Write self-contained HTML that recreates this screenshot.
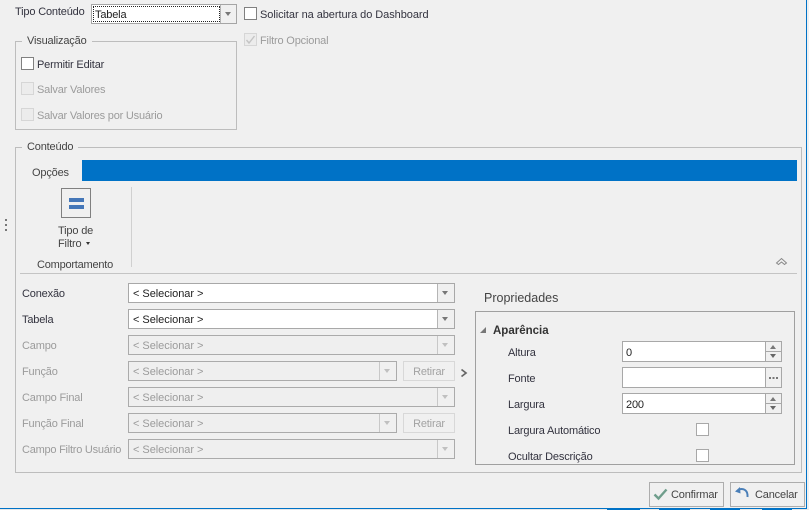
<!DOCTYPE html>
<html><head><meta charset="utf-8">
<style>
html,body{margin:0;padding:0}
body{width:809px;height:510px;overflow:hidden;background:#f0f0f0;position:relative;font-family:"Liberation Sans",sans-serif;font-size:11px;letter-spacing:-.17px;color:#33333f}
div,span,svg{position:absolute;box-sizing:border-box}
.t{white-space:nowrap;line-height:14px;height:14px;margin-top:1px}
.d{color:#9b9b9b}
.g{border:1px solid #bdbdbd}
.leg{background:#f0f0f0;padding:0 5px;white-space:nowrap;line-height:14px;height:14px;color:#444;margin-top:1px}
.cb{width:14px;height:14px;border:1px solid #808080;background:#fff}
.cbd{width:13px;height:13px;border:1px solid #d6d6d6;background:#ececec}
.c{border:1px solid #a8a8a8;background:#fff;height:20px;left:128px;width:327px;line-height:19px;padding-top:1px;padding-left:4px;color:#222;white-space:nowrap;letter-spacing:-.04px}
.c.x{background:#efefef;color:#9b9b9b;border-color:#ababab}
.c i{position:absolute;right:0;top:0;width:16px;height:18px;border-left:1px solid #b5b5b5;background:#f0f0f0}
.c i:after{content:"";position:absolute;left:4px;top:7px;border:3.5px solid transparent;border-top:4px solid #777;border-bottom:0}
.c.x i{border-left-color:#c8c8c8}
.c.x i:after{border-top-color:#c0c0c0}
.r{left:403px;width:52px;height:20px;border:1px solid #d8d8d8;text-align:center;line-height:19px;padding-top:1px;color:#a2a2a2}
.in{left:622px;width:160px;height:21px;border:1px solid #a8a8a8;background:#fff;line-height:20px;padding-top:1px;padding-left:3px;color:#222}
.sp{left:765px;width:17px;height:21px;border:1px solid #a8a8a8;background:#f0f0f0}
.sp b{position:absolute;left:0;width:15px;height:1px;background:#a8a8a8;top:9px}
.up{position:absolute;left:4px;top:3px;border:3.5px solid transparent;border-bottom:4px solid #777;border-top:0;width:0;height:0}
.dn{position:absolute;left:4px;top:12px;border:3.5px solid transparent;border-top:4px solid #666;border-bottom:0;width:0;height:0}
.btn{height:25px;top:482px;border:1px solid #adadad;background:#f0f0f0;color:#444}
</style></head><body>

<div class="t" style="left:15px;top:4px">Tipo Conteúdo</div>
<div style="left:91px;top:4px;width:146px;height:20px;border:1px solid #a5a5a5;background:#fff"></div>
<div style="left:93px;top:6px;width:127px;height:16px;border:1px dotted #222;line-height:15px;padding-top:1px;color:#222;padding-left:1px">Tabela</div>
<div style="left:220px;top:5px;width:16px;height:18px;border-left:1px solid #b5b5b5;background:#f0f0f0"></div>
<div style="left:225px;top:12px;width:0;height:0;border:3.5px solid transparent;border-top:4px solid #777;border-bottom:0"></div>
<div class="cb" style="left:244px;top:7px;width:13px;height:13px"></div>
<div class="t" style="left:260px;top:7px;letter-spacing:-.06px">Solicitar na abertura do Dashboard</div>
<div class="cbd" style="left:244px;top:33px"></div>
<svg style="left:245px;top:34px" width="11" height="11" viewBox="0 0 11 11"><path d="M1.5 6 L4 9 L9.5 2" fill="none" stroke="#c4c4c4" stroke-width="1.4"/></svg>
<div class="t d" style="left:260px;top:33px">Filtro Opcional</div>

<div class="g" style="left:15px;top:41px;width:222px;height:89px"></div>
<div class="leg" style="left:22px;top:33px">Visualização</div>
<div class="cb" style="left:21px;top:57px;width:13px;height:13px"></div>
<div class="t" style="left:37px;top:57px">Permitir Editar</div>
<div class="cbd" style="left:21px;top:82px"></div>
<div class="t d" style="left:37px;top:82px">Salvar Valores</div>
<div class="cbd" style="left:21px;top:108px"></div>
<div class="t d" style="left:37px;top:108px;letter-spacing:-.2px">Salvar Valores por Usuário</div>

<div class="g" style="left:15px;top:147px;width:787px;height:326px"></div>
<div class="leg" style="left:22px;top:139px">Conteúdo</div>
<div style="left:82px;top:160px;width:715px;height:21px;background:#0072c6"></div>
<div class="t" style="left:32px;top:165px;color:#444">Opções</div>
<div style="left:61px;top:188px;width:30px;height:30px;border:1px solid #808080"></div>
<div style="left:69px;top:198px;width:15px;height:4px;background:#4577b8"></div>
<div style="left:69px;top:205px;width:15px;height:4px;background:#4577b8"></div>
<div class="t" style="left:58px;top:223px;color:#444">Tipo de</div>
<div class="t" style="left:58px;top:236px;color:#444">Filtro</div>
<div style="left:86px;top:242px;width:0;height:0;border:2.5px solid transparent;border-top:3px solid #333;border-bottom:0"></div>
<div class="t" style="left:37px;top:257px;color:#444;letter-spacing:-.22px">Comportamento</div>
<div style="left:131px;top:187px;width:1px;height:80px;background:#d0d0d0"></div>
<div style="left:20px;top:273px;width:777px;height:1px;background:#c4c4c4"></div>
<svg style="left:775px;top:256px" width="13" height="11" viewBox="0 0 13 11"><path d="M1.5 7 L6.5 2.5 L11.5 7 L9.5 8.5 L6.5 6 L3.5 8.5 Z" fill="none" stroke="#888" stroke-width="1"/></svg>

<div class="t" style="left:22px;top:286px">Conexão</div>
<div class="c" style="top:283px">&lt; Selecionar &gt;<i></i></div>
<div class="t" style="left:22px;top:312px">Tabela</div>
<div class="c" style="top:309px">&lt; Selecionar &gt;<i></i></div>
<div class="t d" style="left:22px;top:338px">Campo</div>
<div class="c x" style="top:335px">&lt; Selecionar &gt;<i></i></div>
<div class="t d" style="left:22px;top:364px">Função</div>
<div class="c x" style="top:361px;width:269px">&lt; Selecionar &gt;<i></i></div>
<div class="r" style="top:361px">Retirar</div>
<div class="t d" style="left:22px;top:390px">Campo Final</div>
<div class="c x" style="top:387px">&lt; Selecionar &gt;<i></i></div>
<div class="t d" style="left:22px;top:416px">Função Final</div>
<div class="c x" style="top:413px;width:269px">&lt; Selecionar &gt;<i></i></div>
<div class="r" style="top:413px">Retirar</div>
<div class="t d" style="left:22px;top:442px;letter-spacing:-.24px">Campo Filtro Usuário</div>
<div class="c x" style="top:439px">&lt; Selecionar &gt;<i></i></div>

<svg style="left:460px;top:368px" width="9" height="10" viewBox="0 0 9 10"><path d="M1.5 1.5 L6 5 L1.5 8.5" fill="none" stroke="#666" stroke-width="1.7"/></svg>

<div class="t" style="left:484px;top:290px;font-size:12.5px;letter-spacing:0;color:#444">Propriedades</div>
<div style="left:475px;top:311px;width:320px;height:154px;border:1px solid #a0a0a0"></div>
<div style="left:480px;top:327px;width:0;height:0;border-style:solid;border-width:0 0 6px 6px;border-color:transparent transparent #777 transparent"></div>
<div class="t" style="left:493px;top:323px;font-weight:bold;font-size:11.5px;letter-spacing:0;color:#333">Aparência</div>
<div class="t" style="left:508px;top:345px">Altura</div>
<div class="t" style="left:508px;top:371px">Fonte</div>
<div class="t" style="left:508px;top:397px">Largura</div>
<div class="t" style="left:508px;top:423px">Largura Automático</div>
<div class="t" style="left:508px;top:449px">Ocultar Descrição</div>

<div class="in" style="top:341px">0</div>
<div class="sp" style="top:341px"><b></b><span class="up"></span><span class="dn"></span></div>
<div class="in" style="top:367px"></div>
<div class="sp" style="top:367px"></div>
<div style="left:769px;top:377px;width:9px;height:2px;background-image:linear-gradient(90deg,#777 2px,transparent 2px);background-size:3.5px 2px"></div>
<div class="in" style="top:393px">200</div>
<div class="sp" style="top:393px"><b></b><span class="up"></span><span class="dn"></span></div>
<div class="cb" style="left:696px;top:423px;border-color:#a8a8a8;width:13px;height:13px"></div>
<div class="cb" style="left:696px;top:449px;border-color:#a8a8a8;width:13px;height:13px"></div>

<div class="btn" style="left:649px;width:75px"></div>
<svg style="left:653px;top:487px" width="15" height="14" viewBox="0 0 15 14"><path d="M1.5 7.5 L5.5 11.5 L13.5 2.5" fill="none" stroke="#6f9e8c" stroke-width="2.4"/></svg>
<div class="t" style="left:671px;top:487px;color:#444">Confirmar</div>
<div class="btn" style="left:730px;width:75px"></div>
<svg style="left:734px;top:486px" width="16" height="14" viewBox="0 0 16 14"><path d="M5 3.5 C10 2 14 4.5 13.5 11" fill="none" stroke="#4a7fb8" stroke-width="2"/><path d="M1 5.5 L6 1 L6.5 7.5 Z" fill="#4a7fb8"/></svg>
<div class="t" style="left:755px;top:487px;color:#444">Cancelar</div>

<div style="left:806px;top:0;width:1px;height:509px;background:#0072c6"></div>
<div style="left:0;top:508px;width:807px;height:1px;background:#0072c6"></div>
<div style="left:0;top:509px;width:809px;height:1px;background:#e8e8e8"></div>
<div style="left:607px;top:509px;width:33px;height:1px;background:#0072c6"></div>
<div style="left:659px;top:509px;width:31px;height:1px;background:#0072c6"></div>
<div style="left:710px;top:509px;width:30px;height:1px;background:#0072c6"></div>
<div style="left:762px;top:509px;width:30px;height:1px;background:#0072c6"></div>

<div style="left:5px;top:219px;width:2px;height:2px;background:#777"></div>
<div style="left:5px;top:224px;width:2px;height:2px;background:#777"></div>
<div style="left:5px;top:229px;width:2px;height:2px;background:#777"></div>
</body></html>
